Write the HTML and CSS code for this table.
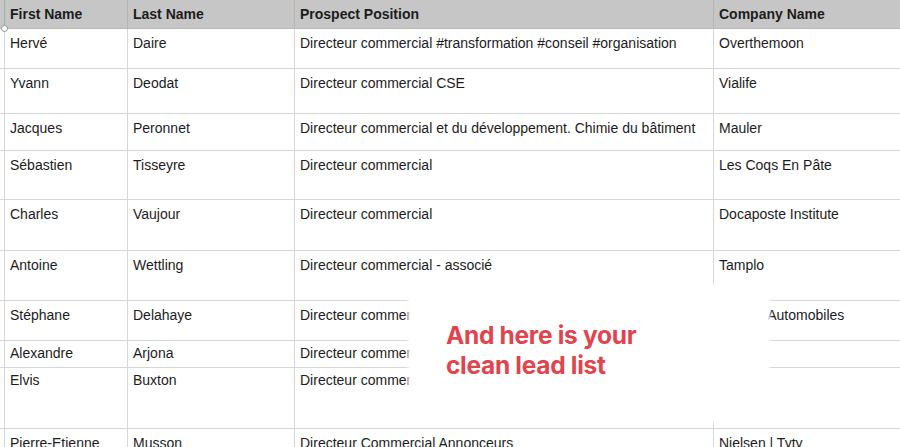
FILE: index.html
```html
<!DOCTYPE html>
<html lang="fr">
<head>
<meta charset="utf-8">
<link rel="stylesheet" href="styles.css">
</head>
<body>
<div class="sheet">
  <div class="row head h0"><div class="g"><span class="handle"></span></div><div class="c">First Name</div><div class="c">Last Name</div><div class="c">Prospect Position</div><div class="c">Company Name</div></div>
  <div class="row h1"><div class="g"></div><div class="c">Hervé</div><div class="c">Daire</div><div class="c">Directeur commercial #transformation #conseil #organisation</div><div class="c">Overthemoon</div></div>
  <div class="row h2"><div class="g"></div><div class="c">Yvann</div><div class="c">Deodat</div><div class="c">Directeur commercial CSE</div><div class="c">Vialife</div></div>
  <div class="row h3"><div class="g"></div><div class="c">Jacques</div><div class="c">Peronnet</div><div class="c">Directeur commercial et du développement. Chimie du bâtiment</div><div class="c">Mauler</div></div>
  <div class="row h4"><div class="g"></div><div class="c">Sébastien</div><div class="c">Tisseyre</div><div class="c">Directeur commercial</div><div class="c">Les Coqs En Pâte</div></div>
  <div class="row h5"><div class="g"></div><div class="c">Charles</div><div class="c">Vaujour</div><div class="c">Directeur commercial</div><div class="c">Docaposte Institute</div></div>
  <div class="row h6"><div class="g"></div><div class="c">Antoine</div><div class="c">Wettling</div><div class="c">Directeur commercial - associé</div><div class="c">Tamplo</div></div>
  <div class="row h7"><div class="g"></div><div class="c">Stéphane</div><div class="c">Delahaye</div><div class="c">Directeur commercial</div><div class="c">Leclerc Automobiles</div></div>
  <div class="row h8"><div class="g"></div><div class="c">Alexandre</div><div class="c">Arjona</div><div class="c">Directeur commercial</div><div class="c"></div></div>
  <div class="row h9"><div class="g"></div><div class="c">Elvis</div><div class="c">Buxton</div><div class="c">Directeur commercial</div><div class="c"></div></div>
  <div class="row h10"><div class="g"></div><div class="c">Pierre-Etienne</div><div class="c">Musson</div><div class="c">Directeur Commercial Annonceurs</div><div class="c">Nielsen | Tyty</div></div>
  <div class="overlay"><p class="msg">And here is your<br>clean lead list</p></div>
</div>
</body>
</html>
```
FILE: styles.css
```css
html, body {
  margin: 0;
  padding: 0;
  background: #ffffff;
}
body {
  width: 900px;
  height: 447px;
  overflow: hidden;
  font-family: "Liberation Sans", Arial, sans-serif;
  font-size: 14px;
  color: #1c1c1c;
}
.sheet {
  position: relative;
  width: 900px;
  height: 447px;
  overflow: hidden;
}
.row {
  display: grid;
  grid-template-columns: 5px 123px 167px 419px 1fr;
  border-bottom: 1px solid #d6d6d6;
  box-sizing: border-box;
}
.row > div {
  border-right: 1px solid #d6d6d6;
  box-sizing: border-box;
  padding: 6px 5px 0 5px;
  line-height: 17px;
  white-space: nowrap;
  overflow: hidden;
}
.row > .g {
  padding: 0;
  position: relative;
  overflow: visible;
}
.row > div:last-child { border-right: none; }
.head {
  background: #c6c6c6;
  font-weight: bold;
  border-bottom-color: #b9b9b9;
}
.head > div {
  border-right-color: #b5b5b5;
  padding-top: 6px;
}
.head > .g {
  border-right: 1px solid #93b8a3;
}
.handle {
  position: absolute;
  left: 1px;
  top: 25px;
  width: 5px;
  height: 5px;
  border: 1px solid #8a9a90;
  border-radius: 50%;
  background: #ffffff;
  z-index: 2;
}
.h0 { height: 29px; }
.h1 { height: 40px; }
.h2 { height: 45px; }
.h3 { height: 37px; }
.h4 { height: 49px; }
.h5 { height: 51px; }
.h6 { height: 50px; }
.h7 { height: 40px; }
.h8 { height: 27px; }
.h9 { height: 61px; }
.h10 { height: 40px; }
.h8 > div, .h9 > div { padding-top: 4px; }
.overlay {
  position: absolute;
  left: 410px;
  top: 286px;
  width: 358px;
  height: 134px;
  background: #ffffff;
  box-shadow: 0 0 3px 2px #ffffff;
}
.msg {
  margin: 0;
  padding: 34px 0 0 36px;
  font-family: Inter, "Open Sans", sans-serif;
  font-weight: 700;
  font-size: 24.5px;
  line-height: 30px;
  color: #e0444d;
  letter-spacing: -0.3px;
}
```
